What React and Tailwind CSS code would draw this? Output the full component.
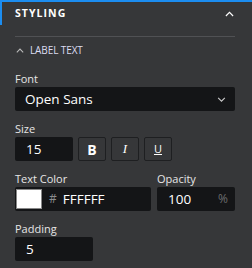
import React from "react";

const font = { fontFamily: '"Open Sans", "Liberation Sans", sans-serif' };

function Chevron({ dir = "up", className = "" }) {
  return (
    <svg className={className} viewBox="0 0 10 6" fill="none" stroke="currentColor" strokeWidth={1.3}>
      {dir === "up" ? <path d="M1 5.2L5 1.2l4 4" /> : <path d="M1 1l4 4 4-4" />}
    </svg>
  );
}

function Label({ children, className = "" }) {
  return <div className={`text-[11px] leading-none text-[#e6e6e6] ${className}`}>{children}</div>;
}

export default function App() {
  return (
    <div className="w-[252px] h-[268px] bg-[#363739] overflow-hidden" style={font}>
      <div className="h-[2px] bg-[#1c8df0]" />
      <div className="flex">
        <div className="w-[2px] h-[23px] bg-[#1c8df0]" />
        <div className="flex-1 pl-[13px] pr-[17px]">
          <div className="h-[23px] flex items-center justify-between">
            <span className="text-[10.5px] font-bold tracking-[0.1em] text-white">STYLING</span>
            <Chevron className="w-[9px] h-[6px] text-white mr-[1px]" />
          </div>
        </div>
      </div>
      <div className="pl-[15px] pr-[17px]">
        <div className="mt-[11px] h-px bg-[#505154]" />
        <div className="h-[26px] flex items-center gap-[6px] text-[#dcdcf0]">
          <Chevron className="w-[8px] h-[5px] text-[#bbbbbb] ml-[1px]" />
          <span className="text-[10px] tracking-[-0.01em]">LABEL TEXT</span>
        </div>

        <Label className="mt-[10px]">Font</Label>
        <div className="mt-[3px] h-[24px] rounded-[2px] bg-[#141517] flex items-center justify-between pl-[10px] pr-[9px]">
          <span className="text-[13.5px] text-white">Open Sans</span>
          <Chevron dir="down" className="w-[9px] h-[5px] text-[#cccccc]" />
        </div>

        <Label className="mt-[12px]">Size</Label>
        <div className="mt-[3px] flex gap-[5px]">
          <div className="w-[58px] h-[24px] rounded-[2px] bg-[#141517] flex items-center pl-[11px] text-[13.5px] text-white">15</div>
          <div className="w-[28px] h-[24px] rounded-[2px] border border-[#1e1f21] flex items-center justify-center text-[14px] font-bold text-white">B</div>
          <div className="w-[28px] h-[24px] rounded-[2px] border border-[#1e1f21] flex items-center justify-center text-[13px] italic text-white" style={{ fontFamily: '"Liberation Serif", serif' }}>I</div>
          <div className="w-[28px] h-[24px] rounded-[2px] border border-[#1e1f21] flex items-center justify-center text-[11px] underline text-white">U</div>
        </div>

        <div className="mt-[12px] flex gap-[6px]">
          <div className="w-[136px]">
            <Label>Text Color</Label>
            <div className="mt-[3px] h-[24px] rounded-[2px] bg-[#141517] flex items-center pl-[1px]">
              <div className="w-[26px] h-[20px] bg-white border border-[#888]" />
              <span className="ml-[7px] text-[12px] text-[#8a8b8d]">#</span>
              <span className="ml-[6px] text-[13.5px] text-white">FFFFFF</span>
            </div>
          </div>
          <div className="flex-1">
            <Label>Opacity</Label>
            <div className="mt-[3px] h-[24px] rounded-[2px] bg-[#141517] flex items-center justify-between pl-[11px] pr-[7px]">
              <span className="text-[13.5px] text-white">100</span>
              <span className="text-[12px] text-[#6c6d6f]">%</span>
            </div>
          </div>
        </div>

        <Label className="mt-[12px]">Padding</Label>
        <div className="mt-[3px] w-[78px] h-[24px] rounded-[2px] bg-[#141517] flex items-center pl-[11px] text-[13.5px] text-white">5</div>
      </div>
    </div>
  );
}
